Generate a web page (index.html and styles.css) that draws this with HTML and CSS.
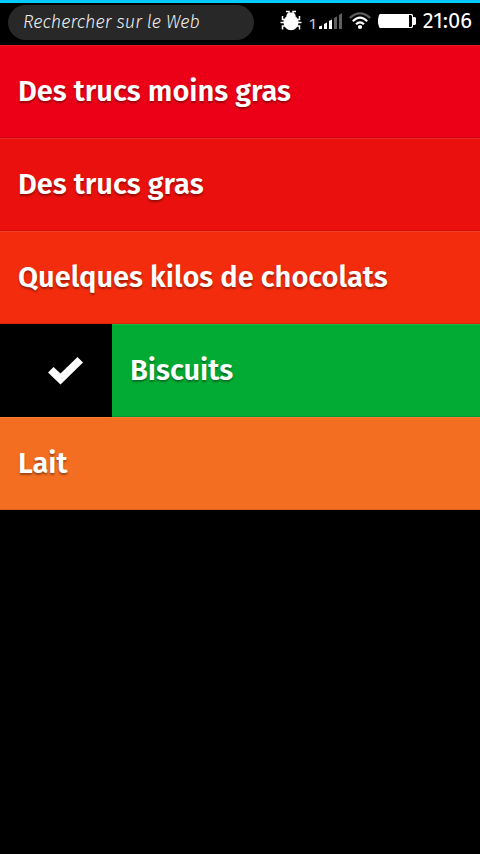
FILE: index.html
```html
<!DOCTYPE html>
<html lang="fr">
<head>
<meta charset="utf-8">
<meta name="viewport" content="width=device-width, initial-scale=1">
<title>Courses</title>
<link rel="stylesheet" href="styles.css">
</head>
<body>
<header class="status-bar">
  <input class="search" type="search" placeholder="Rechercher sur le Web" aria-label="Rechercher sur le Web">
  <div class="indicators">
    <svg class="bug" width="22" height="22" viewBox="0 0 22 22" aria-hidden="true">
      <path d="M6 1.500H9V5M16 1.500H13V5M6 9.500H2.500V6M16 9.500H19.500V6M5 12.500H0.500M17 12.500H21.500M6 16H2.500V19.500M16 16H19.500V19.500" fill="none" stroke="#fff" stroke-width="1.500"/>
      <ellipse cx="11" cy="12.500" rx="7.500" ry="7.800" fill="#fff"/>
      <ellipse cx="11" cy="5.500" rx="4.500" ry="3" fill="#fff"/>
    </svg>
    <span class="sim">1</span>
    <svg class="signal" width="23" height="16" viewBox="0 0 23 16" aria-hidden="true">
      <path d="M0 13.500L3 12.500V16H0zM5 11L8 9.500V16H5zM10 8L13 6.500V16H10z" fill="#fff"/>
      <path d="M15 5L18 3.500V16H15zM20 2L23 0V16H20z" fill="#606060"/>
    </svg>
    <svg class="wifi" width="22" height="18" viewBox="0 0 22 18" fill="none" stroke-width="2.200" aria-hidden="true">
      <path d="M0.800 6Q11 -3.400 21.200 6" stroke="#5c5c5c"/>
      <path d="M3.800 9.200Q11 2.200 18.200 9.200M7 12.300Q11 8.400 15 12.300" stroke="#fff"/>
      <circle cx="11" cy="15" r="2.100" fill="#fff"/>
    </svg>
    <svg class="battery" width="38" height="14" viewBox="0 0 38 14" aria-hidden="true">
      <path d="M2 0H34L35 1V3H37L38 4V10L37 11H35V13L34 14H2L1 13L0 9V5L1 1z" fill="#fff"/>
      <path d="M31 1H33L34 2V12L33 13H31z" fill="#000"/>
    </svg>
    <time class="clock">21:06</time>
  </div>
</header>
<main>
  <ul class="list">
    <li class="item crimson"><span class="label">Des trucs moins gras</span></li>
    <li class="item red"><span class="label">Des trucs gras</span></li>
    <li class="item vermilion"><span class="label">Quelques kilos de chocolats</span></li>
    <li class="item done">
      <span class="mark">
        <svg width="36" height="30" viewBox="0 0 36 30" role="img" aria-label="Fait"><path d="M0 16.500L5.500 11L12.500 17.500L29.500 1L35 6.500L12.500 28.500z" fill="#fff"/></svg>
      </span>
      <span class="label">Biscuits</span>
    </li>
    <li class="item orange"><span class="label">Lait</span></li>
  </ul>
</main>
</body>
</html>
```

FILE: styles.css
```css
* {
  box-sizing: border-box;
}

body {
  margin: 0;
  background: #000;
  color: #fff;
  font-family: "Fira Sans", "Noto Sans", sans-serif;
}

.status-bar {
  display: flex;
  align-items: flex-start;
  justify-content: space-between;
  height: 45px;
  padding: 2px 8px 0;
  border-top: 3px solid #00caff;
}

.search {
  flex: 0 1 246px;
  min-width: 0;
  height: 35px;
  margin: 0;
  padding: 0 15px 2px;
  border: 0;
  border-radius: 18px;
  background: #282828;
  color: #eee;
  font: italic 300 18px "Fira Sans", "Open Sans", sans-serif;
  appearance: none;
}

.search::placeholder {
  color: #eee;
  opacity: 1;
}

.indicators {
  display: flex;
  align-items: center;
  gap: 7px;
  height: 32px;
}

.indicators svg {
  flex: none;
}

.sim {
  padding-top: 6px;
  color: #ccc;
  font-size: 15px;
  line-height: 16px;
}

.signal {
  margin-left: -4px;
}

.clock {
  font-size: 22px;
  font-weight: 400;
  line-height: 24px;
}

.list {
  margin: 0;
  padding: 0;
  list-style: none;
}

.item {
  display: flex;
  height: 93px;
}

.label {
  flex: 1;
  padding: 0 18px;
  border-top: 1px solid rgba(255, 255, 255, 0.1);
  border-bottom: 1px solid rgba(0, 0, 0, 0.1);
  font-size: 29px;
  font-weight: 600;
  line-height: 91px;
  white-space: nowrap;
  text-shadow: 0 2px 2px rgba(0, 0, 0, 0.35);
}

.mark {
  display: flex;
  flex: 0 0 112px;
  align-items: center;
  justify-content: flex-end;
  padding-right: 28px;
}

.crimson {
  background: #eb0017;
}

.red {
  background: #e9100d;
}

.vermilion {
  background: #f32c0d;
}

.done .label {
  background: #02ab33;
}

.orange {
  background: #f36e21;
}
```
